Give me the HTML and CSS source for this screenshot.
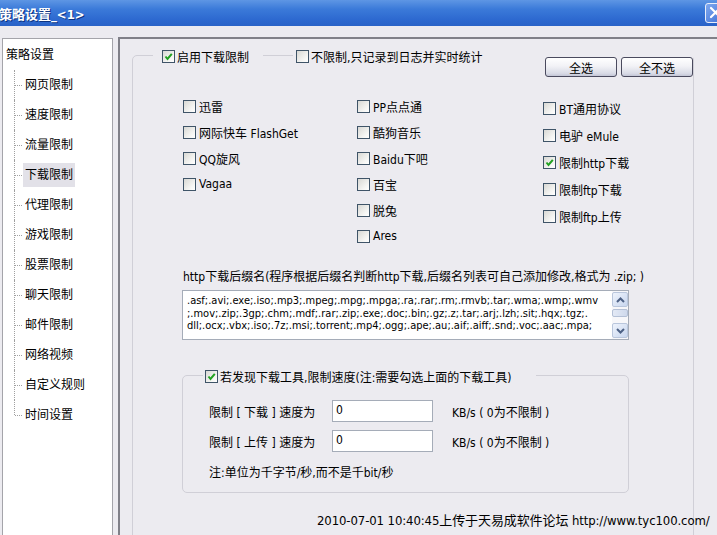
FILE: index.html
```html
<!DOCTYPE html>
<html lang="zh-CN">
<head>
    <meta charset="UTF-8">
    <title>策略设置_&lt;1&gt;</title>
    <link rel="stylesheet" href="styles.css">
</head>
<body>
    <div class="titlebar">
        <span class="title">策略设置_&lt;1&gt;</span>
        <span class="close-btn">
            <svg width="19" height="18" viewBox="0 0 19 18"><path d="M5 4 L14 13 M14 4 L5 13" stroke="#fff" stroke-width="2.2" stroke-linecap="round"/></svg>
        </span>
    </div>

    <div class="client">
        <div class="tree">
            <div class="tree-root">策略设置</div>
            <ul class="tree-list">
                <li><span>网页限制</span></li>
                <li><span>速度限制</span></li>
                <li><span>流量限制</span></li>
                <li class="selected"><span>下载限制</span></li>
                <li><span>代理限制</span></li>
                <li><span>游戏限制</span></li>
                <li><span>股票限制</span></li>
                <li><span>聊天限制</span></li>
                <li><span>邮件限制</span></li>
                <li><span>网络视频</span></li>
                <li><span>自定义规则</span></li>
                <li><span>时间设置</span></li>
            </ul>
        </div>

        <div class="main">
            <div class="group">
                <div class="group-head">
                    <label class="chk legend legend-1"><span class="cb on"><svg width="11" height="11" viewBox="0 0 11 11"><path d="M2.5 5.5 L4.5 8 L8.8 2.8" fill="none" stroke="#21a121" stroke-width="2"/></svg></span>启用下载限制</label>
                    <label class="chk legend legend-2"><span class="cb"></span>不限制,只记录到日志并实时统计</label>
                </div>
                <div class="btn-row">
                    <button class="btn">全选</button>
                    <button class="btn">全不选</button>
                </div>

                <div class="tools">
                    <div class="col">
                        <label class="chk"><span class="cb"></span>迅雷</label>
                        <label class="chk"><span class="cb"></span>网际快车 FlashGet</label>
                        <label class="chk"><span class="cb"></span>QQ旋风</label>
                        <label class="chk"><span class="cb"></span>Vagaa</label>
                    </div>
                    <div class="col">
                        <label class="chk"><span class="cb"></span>PP点点通</label>
                        <label class="chk"><span class="cb"></span>酷狗音乐</label>
                        <label class="chk"><span class="cb"></span>Baidu下吧</label>
                        <label class="chk"><span class="cb"></span>百宝</label>
                        <label class="chk"><span class="cb"></span>脱兔</label>
                        <label class="chk"><span class="cb"></span>Ares</label>
                    </div>
                    <div class="col col-3">
                        <label class="chk"><span class="cb"></span>BT通用协议</label>
                        <label class="chk"><span class="cb"></span> 电驴 eMule</label>
                        <label class="chk"><span class="cb on"><svg width="11" height="11" viewBox="0 0 11 11"><path d="M2.5 5.5 L4.5 8 L8.8 2.8" fill="none" stroke="#21a121" stroke-width="2"/></svg></span>限制http下载</label>
                        <label class="chk"><span class="cb"></span>限制ftp下载</label>
                        <label class="chk"><span class="cb"></span>限制ftp上传</label>
                    </div>
                </div>

                <div class="ext-label">http下载后缀名(程序根据后缀名判断http下载,后缀名列表可自己添加修改,格式为 .zip; )</div>
                <div class="ext-box">
                    <div class="ext-text">
                        <div>.asf;.avi;.exe;.iso;.mp3;.mpeg;.mpg;.mpga;.ra;.rar;.rm;.rmvb;.tar;.wma;.wmp;.wmv</div>
                        <div>;.mov;.zip;.3gp;.chm;.mdf;.rar;.zip;.exe;.doc;.bin;.gz;.z;.tar;.arj;.lzh;.sit;.hqx;.tgz;.</div>
                        <div>dll;.ocx;.vbx;.iso;.7z;.msi;.torrent;.mp4;.ogg;.ape;.au;.aif;.aiff;.snd;.voc;.aac;.mpa;</div>
                    </div>
                    <div class="vscroll">
                        <div class="sb-btn"><svg width="9" height="6" viewBox="0 0 9 6"><path d="M1 5 L4.5 1.5 L8 5" fill="none" stroke="#4d6185" stroke-width="2"/></svg></div>
                        <div class="sb-track"><div class="sb-thumb"></div></div>
                        <div class="sb-btn"><svg width="9" height="6" viewBox="0 0 9 6"><path d="M1 1 L4.5 4.5 L8 1" fill="none" stroke="#4d6185" stroke-width="2"/></svg></div>
                    </div>
                </div>

                <div class="speed-group">
                    <div class="speed-head">
                        <label class="chk legend legend-3"><span class="cb on"><svg width="11" height="11" viewBox="0 0 11 11"><path d="M2.5 5.5 L4.5 8 L8.8 2.8" fill="none" stroke="#21a121" stroke-width="2"/></svg></span>若发现下载工具,限制速度(注:需要勾选上面的下载工具)</label>
                    </div>
                    <div class="speed-row first">
                        <span class="speed-label">限制 [ 下载 ] 速度为</span>
                        <span class="field">0</span>
                        <span class="unit">KB/s ( 0为不限制 )</span>
                    </div>
                    <div class="speed-row">
                        <span class="speed-label">限制 [ 上传 ] 速度为</span>
                        <span class="field">0</span>
                        <span class="unit">KB/s ( 0为不限制 )</span>
                    </div>
                    <div class="speed-note">注:单位为千字节/秒,而不是千bit/秒</div>
                </div>

                <div class="stamp">2010-07-01 10:40:45上传于天易成软件论坛 http://www.tyc100.com/</div>
            </div>
        </div>
    </div>
</body>
</html>
```

FILE: styles.css
```css
* {
    box-sizing: border-box;
}
body {
    margin: 0;
    width: 717px;
    height: 535px;
    overflow: hidden;
    background: #ecebf0;
    font-family: "DejaVu Sans Condensed", "Liberation Sans", "Noto Sans CJK SC", sans-serif;
    font-size: 12px;
    color: #000;
}

/* title bar */
.titlebar {
    height: 26px;
    display: flex;
    align-items: center;
    justify-content: space-between;
    background: linear-gradient(#5e96e4, #3b7ad9 35%, #2d69d0 75%, #2a63c7);
    color: #fff;
}
.title {
    margin-left: -1px;
    font-weight: bold;
    font-size: 13px;
    text-shadow: 1px 1px 0 #0d3380;
}
.close-btn {
    width: 21px;
    height: 20px;
    margin-right: -9px;
    border: 1px solid #e8eefa;
    border-radius: 3px;
    background: linear-gradient(135deg, #7fa8ee, #3d6fd6);
    display: flex;
    align-items: center;
    justify-content: center;
}

.client {
    display: flex;
    height: 509px;
    padding-top: 11px;
}

/* tree */
.tree {
    width: 111px;
    margin: 1px 0 0 2px;
    padding-top: 1px;
    background: #fff;
    border: 1px solid #a4a4aa;
    border-bottom: none;
}
.tree-root {
    height: 30px;
    line-height: 30px;
    padding-left: 3px;
}
.tree-list {
    list-style: none;
    margin: 0 0 0 11px;
    padding: 0;
}
.tree-list li {
    position: relative;
    height: 30px;
    display: flex;
    align-items: center;
    padding-left: 9px;
}
.tree-list li::before {
    content: "";
    position: absolute;
    left: 0;
    top: 0;
    bottom: 0;
    border-left: 1px dotted #a0a0a0;
}
.tree-list li:last-child::before {
    bottom: 50%;
}
.tree-list li::after {
    content: "";
    position: absolute;
    left: 1px;
    top: 50%;
    width: 7px;
    border-top: 1px dotted #a0a0a0;
}
.tree-list li span {
    line-height: 14px;
    padding: 0 2px;
}
.tree-list li.selected span {
    padding: 5px 2px;
    background: #e2e1e8;
}

/* main panel */
.main {
    flex: 1;
    margin-left: 5px;
    padding: 16px 0 0 12px;
    border-top: 2px solid #808088;
    border-left: 2px solid #808088;
}
.group {
    width: 562px;
    height: 500px;
    border: 1px solid #d0cfd7;
    border-radius: 5px;
}

.chk {
    display: flex;
    align-items: center;
    gap: 3px;
    height: 26px;
    white-space: nowrap;
}
.cb {
    width: 13px;
    height: 13px;
    flex: none;
    border: 1px solid #3f5468;
    background: linear-gradient(135deg, #d8d8d4, #f6f6f4 70%, #fff);
    display: flex;
    align-items: center;
    justify-content: center;
}

.group-head {
    display: flex;
    height: 14px;
    margin-top: -7px;
    padding-left: 20px;
}
.legend {
    height: 14px;
    background: #ecebf0;
    gap: 2px;
}
.legend-1 {
    padding: 0 14px 0 9px;
}
.legend-2 {
    flex: 1;
    margin-left: 30px;
    padding-left: 3px;
}

.btn-row {
    display: flex;
    justify-content: flex-end;
    gap: 4px;
    margin-top: -6px;
}
.btn {
    width: 72px;
    height: 20px;
    padding: 0;
    font: inherit;
    color: #000;
    border: 1px solid #4a4a5e;
    border-radius: 3px;
    background: linear-gradient(#ffffff, #f2f2f6 45%, #d9dbe6 85%, #c3c6d6);
}

.tools {
    display: grid;
    grid-template-columns: 174px 186px 1fr;
    margin-top: 16px;
    padding-left: 50px;
}
.col-3 {
    padding-top: 2px;
}
.col-3 .chk {
    height: 27px;
}

.ext-label {
    margin-top: 21px;
    padding-left: 50px;
    line-height: 14px;
    white-space: nowrap;
}
.ext-box {
    display: flex;
    width: 447px;
    height: 50px;
    margin: 6px 0 0 49px;
    background: #fff;
    border: 1px solid #a5acb8;
}
.ext-text {
    flex: 1;
    overflow: hidden;
    padding: 4px 0 0 4px;
    font-size: 11px;
    line-height: 12.5px;
    white-space: nowrap;
}
.vscroll {
    width: 16px;
    display: flex;
    flex-direction: column;
    padding: 1px 0;
    background: #f7f7fa;
}
.sb-btn {
    height: 15px;
    border: 1px solid #b9c6dc;
    border-radius: 2px;
    background: linear-gradient(135deg, #eef3fc, #c8d6ee);
    display: flex;
    align-items: center;
    justify-content: center;
}
.sb-track {
    flex: 1;
    padding: 2px 0;
}
.sb-thumb {
    height: 8px;
    border: 1px solid #b4c0d6;
    border-radius: 2px;
    background: linear-gradient(90deg, #e3e9f5, #cfd9ec);
}

/* speed limit group */
.speed-group {
    width: 447px;
    height: 118px;
    margin: 35px 0 0 49px;
    border: 1px solid #d0cfd7;
    border-radius: 5px;
}
.speed-head {
    display: flex;
    height: 14px;
    margin-top: -7px;
    padding-left: 20px;
}
.legend-3 {
    padding: 0 24px 0 2px;
}
.speed-row {
    display: flex;
    align-items: center;
    height: 22px;
    margin-top: 8px;
    padding-left: 26px;
}
.speed-row.first {
    margin-top: 17px;
}
.speed-label {
    width: 123px;
    white-space: nowrap;
}
.field {
    width: 101px;
    height: 22px;
    padding: 2px 3px;
    line-height: 14px;
    background: #fff;
    border: 1px solid #a5acb8;
}
.unit {
    margin-left: 19px;
    white-space: nowrap;
}
.speed-note {
    margin-top: 14px;
    padding-left: 26px;
    line-height: 14px;
}

.stamp {
    margin: 20px 0 0 184px;
    font-size: 13px;
    line-height: 16px;
    letter-spacing: -0.1px;
    white-space: nowrap;
}
```
